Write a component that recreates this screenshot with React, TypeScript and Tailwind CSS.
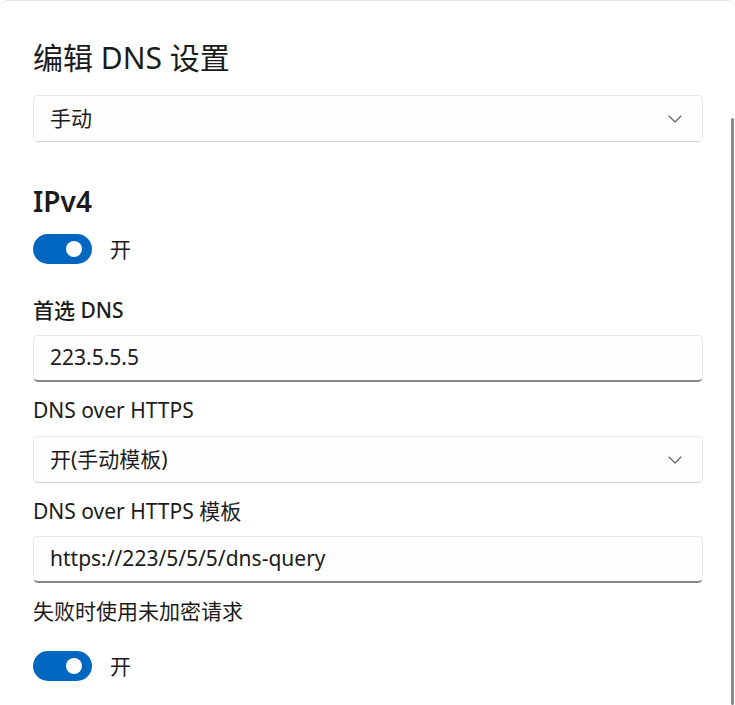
import React from "react";

function Chevron() {
  return (
    <svg width="14" height="8" viewBox="0 0 14 8" fill="none">
      <path d="M1 1l6 6 6-6" stroke="#5f5f5f" strokeWidth="1.1" strokeLinecap="round" strokeLinejoin="round" />
    </svg>
  );
}

function Select({ value, className }: { value: string; className?: string }) {
  return (
    <div
      className={
        "flex h-[47px] items-center justify-between rounded-[5px] border border-[#e8e8e8] border-b-[#d2d2d2] bg-[#fefefe] pl-[16px] pr-[20px] text-[21px] " +
        (className || "")
      }
    >
      <span>{value}</span>
      <Chevron />
    </div>
  );
}

function TextBox({ value, className }: { value: string; className?: string }) {
  return (
    <div
      className={
        "flex h-[47px] items-center rounded-[5px] border border-[#e8e8e8] border-b-2 border-b-[#868686] bg-[#fefefe] pl-[16px] text-[21px] " +
        (className || "")
      }
    >
      <span>{value}</span>
    </div>
  );
}

function Toggle({ label, className }: { label: string; className?: string }) {
  return (
    <div className={"flex h-[30px] items-center " + (className || "")}>
      <div className="flex h-[30px] w-[59px] items-center justify-end rounded-full bg-[#0067c0] pr-[10px]">
        <div className="h-[16px] w-[16px] rounded-full bg-white" />
      </div>
      <span className="ml-[18px] text-[21px] leading-[28px]">{label}</span>
    </div>
  );
}

export default function App() {
  return (
    <div className="relative h-[705px] w-[735px] overflow-hidden rounded-t-[8px] border-t border-[#e3e3e3] bg-white font-['Noto_Sans','Noto_Sans_CJK_SC',sans-serif] text-[#1b1b1b]">
      <div className="flex flex-col pl-[33px] pr-[32px] pt-[37px]">
        <h1 className="text-[30px] font-normal leading-[40px]">编辑 DNS 设置</h1>
        <Select value="手动" className="mt-[17px] h-[46px]" />

        <h2 className="mt-[39px] text-[28px] font-semibold leading-[40px]">IPv4</h2>
        <Toggle label="开" className="mt-[13px]" />

        <div className="mt-[32px] text-[21px] font-medium leading-[28px]">首选 DNS</div>
        <TextBox value="223.5.5.5" className="mt-[11px]" />

        <div className="mt-[14px] text-[21px] leading-[28px]">DNS over HTTPS</div>
        <Select value="开(手动模板)" className="mt-[12px]" />

        <div className="mt-[14px] text-[21px] leading-[28px]">DNS over HTTPS 模板</div>
        <TextBox value="https://223/5/5/5/dns-query" className="mt-[11px]" />

        <div className="mt-[14px] text-[21px] leading-[28px]">失败时使用未加密请求</div>
        <Toggle label="开" className="mt-[26px]" />
      </div>

      {/* scrollbar thumb */}
      <div className="absolute bottom-0 right-[1px] top-[117px] w-[3px] rounded-full bg-[#8a8a8a]" />
    </div>
  );
}
